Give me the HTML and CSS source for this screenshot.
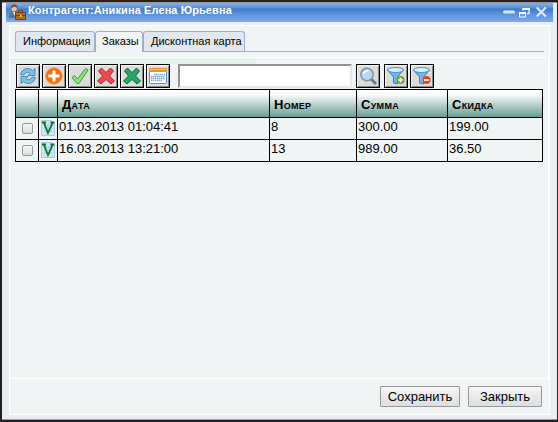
FILE: index.html
```html
<!DOCTYPE html>
<html lang="ru">
<head>
<meta charset="utf-8">
<title>Контрагент</title>
<link rel="stylesheet" href="styles.css">
</head>
<body>
<div class="window">
  <header class="titlebar">
    <svg class="person" width="18" height="17" viewBox="0 0 18 17"><path d="M0 14V10l2-2h6l2 2v4z" fill="#667487"/><path d="M4 8h3l-1 4z" fill="#fff"/><circle cx="5" cy="4.500" r="2.800" fill="#efc28d"/><path d="M2 5V2L4 .5h3L8.500 2v3L7 3H4z" fill="#795032"/><rect x="6.500" y="8.500" width="10" height="7" fill="#b66b24" stroke="#704018"/><path d="M9.500 8V6.500h4V8M7 11.500h9" fill="none" stroke="#704018"/><path d="M11 11h1.500v2H11z" fill="#ffdc67"/></svg>
    <h1>Контрагент:Аникина Елена Юрьевна</h1>
    <svg class="controls" width="48" height="16" viewBox="0 0 48 16"><path d="M3.500 8h9" stroke="#dce8fc" stroke-width="3" stroke-linecap="round"/><path d="M22 6.500V5h6v4.500h-2" fill="none" stroke="#e3edfb" stroke-width="1.500"/><path d="M18.500 9h6v4h-6z" fill="#6a9bdf" stroke="#fff"/><path d="M18 9h7M21.500 5H29" stroke="#fff" stroke-width="2"/><path d="M35.800 3.500l9 9m0-9l-9 9" stroke="#dfebff" stroke-width="2.200"/></svg>
  </header>
  <main class="panel">
    <nav class="tabs"><span class="tab info">Информация</span><span class="tab active">Заказы</span><span class="tab card">Дисконтная карта</span></nav>
    <section class="content">
      <div class="toolbar">
        <button class="tool"><svg viewBox="0 0 20 20"><path d="M2.500 8.500C4 2 11 1 14.500 4.500L17 2.500v7h-7l2-2.200C9.500 5.500 7 6.500 6 9zM17.500 11.500C16 18 9 19 5.500 15.500L3 17.500v-7h7l-2 2.200c2.500 1.800 5 .8 6-1.700z" fill="#7fc0e2" stroke="#3f86ae" stroke-width=".9"/></svg></button>
        <button class="tool"><svg viewBox="0 0 20 20"><circle cx="10" cy="10" r="8.300" fill="#f5700d" stroke="#f0a060"/><path d="M10 4.500v11M4.500 10h11" stroke="#fff" stroke-width="3"/></svg></button>
        <button class="tool"><svg viewBox="0 0 20 20"><path d="M2 11.500l2.500-2L7.500 13l8-10.500L18 4 9 17.500H7z" fill="#8be278" stroke="#3ba236"/></svg></button>
        <button class="tool"><svg viewBox="0 0 20 20"><path d="M2.500 5L5.500 2l4.500 4.500L14.500 2l3 3L13.500 10l5 5-3.500 3-5-4.500L5 18l-3.500-3 5-5z" fill="#ee494e" stroke="#b7242b"/></svg></button>
        <button class="tool"><svg viewBox="0 0 20 20"><path d="M2.500 5L5.500 2l4.500 4.500L14.500 2l3 3L13.500 10l5 5-3.500 3-5-4.500L5 18l-3.500-3 5-5z" fill="#27a367" stroke="#0b6a40"/></svg></button>
        <button class="tool"><svg viewBox="0 0 20 20"><rect x="1.500" y="2.500" width="17" height="15" rx="1" fill="#fff" stroke="#4c91d9"/><path d="M1 2h18v4H1z" fill="#ec922b"/><path d="M2 3.500h16" stroke="#ffc56b"/><path d="M6 8.500h11M3 10.500h14M3 12.500h14M3 14.500h11" stroke="#78ace4" stroke-width="1.300" stroke-dasharray="1.500 .5"/></svg></button>
        <input class="search" type="text" aria-label="Поиск">
        <button class="tool find"><svg viewBox="0 0 20 20"><path d="M13 13l5 5" stroke="#66788f" stroke-width="3"/><circle cx="9" cy="8.500" r="6.200" fill="#b9d8f5" stroke="#7e92aa" stroke-width="1.500"/><path d="M5.500 8a4 4 0 0 1 5-3" fill="none" stroke="#fff" stroke-width="1.500"/></svg></button>
        <button class="tool"><svg viewBox="0 0 20 20"><path d="M1.500 4l6 7v6l4 1v-7l6-7z" fill="#70b7e7" stroke="#3b80b7"/><ellipse cx="9.500" cy="4" rx="8" ry="2.500" fill="#d6efff" stroke="#4990c8"/><circle cx="14.500" cy="14" r="4" fill="#61a91c"/><path d="M12 14h5m-2.500-2.500v5" stroke="#fff" stroke-width="1.700"/></svg></button>
        <button class="tool"><svg viewBox="0 0 20 20"><path d="M1.500 4l6 7v6l4 1v-7l6-7z" fill="#70b7e7" stroke="#3b80b7"/><ellipse cx="9.500" cy="4" rx="8" ry="2.500" fill="#d6efff" stroke="#4990c8"/><circle cx="14.500" cy="14" r="4" fill="#e84220"/><path d="M12 14h5" stroke="#fff" stroke-width="1.700"/></svg></button>
      </div>
      <table>
        <colgroup><col class="c1"><col class="c2"><col class="c3"><col class="c4"><col class="c5"><col class="c6"></colgroup>
        <thead><tr><th></th><th></th><th>Дата</th><th>Номер</th><th>Сумма</th><th>Скидка</th></tr></thead>
        <tbody>
          <tr><td class="pick"><span class="box"></span></td><td class="state"><svg width="14" height="16" viewBox="0 0 14 16"><path d="M.5.500h10l3 3v12H.5z" fill="#cfe3fa" stroke="#a6c9ec"/><path d="M3 5h8M3 8h8M3 11h8" stroke="#9fc4ea"/><path d="M1 2.500h4M9.500 2.500h4M2.800 2.500L7 13l4.800-10.500" fill="none" stroke="#087c19" stroke-width="1.800"/></svg></td><td>01.03.2013 01:04:41</td><td>8</td><td>300.00</td><td>199.00</td></tr>
          <tr><td class="pick"><span class="box"></span></td><td class="state"><svg width="14" height="16" viewBox="0 0 14 16"><path d="M.5.500h10l3 3v12H.5z" fill="#cfe3fa" stroke="#a6c9ec"/><path d="M3 5h8M3 8h8M3 11h8" stroke="#9fc4ea"/><path d="M1 2.500h4M9.500 2.500h4M2.800 2.500L7 13l4.800-10.500" fill="none" stroke="#087c19" stroke-width="1.800"/></svg></td><td>16.03.2013 13:21:00</td><td>13</td><td>989.00</td><td>36.50</td></tr>
        </tbody>
      </table>
    </section>
    <footer><button class="action save">Сохранить</button><button class="action close">Закрыть</button></footer>
  </main>
</div>
</body>
</html>
```
FILE: styles.css
```css
* { box-sizing: border-box; }
body { margin: 0; width: 558px; height: 422px; overflow: hidden; padding: 2px 1px 2px 2px; background: #222; font-family: "Liberation Sans", sans-serif; color: #000; }
.window { height: 418px; padding: 0 4px; background: #e9eef4; border-top: 1px solid #99948f; border-bottom: 1px solid #999ca2; }
.titlebar { height: 19px; display: flex; background: linear-gradient(#80aceb 0, #659be2 20%, #427cc8 32%, #5e92dc 60%, #7eaaea 100%); }
.person { margin: 1px 0 0 3px; }
h1 { margin: 1px 0 0 1px; font-size: 11px; line-height: 13px; letter-spacing: .1px; color: #fff; white-space: nowrap; }
.controls { margin: 1px 4px 0 auto; }
.panel { margin: 3px 3px 0; height: 390px; border: 1px solid #fff; background: #f0f4f4; display: flex; flex-direction: column; }
.tabs { flex: none; height: 26px; margin: 5px 5px 0; display: flex; background: linear-gradient(#9fafcb,#9fafcb) 0 20px / 100% 1px no-repeat; }
.tab { height: 20px; border: 1px solid #9fafcb; border-bottom: 0; border-radius: 3px 3px 0 0; background: #e0e7ef; font-size: 11px; line-height: 19px; padding-left: 7px; white-space: nowrap; }
.info { width: 80px; }
.active { width: 48px; height: 21px; padding-left: 6px; background: #f0f4f7; }
.card { width: 102px; }
.content { flex: none; height: 322px; border: solid #fff; border-width: 1px 1px 1px 0; padding: 6px 0 0 5px; background: linear-gradient(#e4f2ee,#e4f2ee) 0 0 / 246px 6px no-repeat; }
.toolbar { display: flex; gap: 2px; height: 25px; padding-left: 1px; }
.tool { width: 24px; height: 24px; padding: 1px; border: 1px solid #050505; background: #dcdcdc; box-shadow: inset 1px 1px #f4f4f4, inset -1px -1px #8a8a8a; }
.tool svg { display: block; width: 20px; height: 20px; }
.search { width: 174px; height: 24px; margin: 0 2px 0 6px; border: 2px solid; border-color: #929292 #e8e8e8 #e8e8e8 #929292; background: #fff; padding: 1px; }
.find { margin-right: 2px; }
table { width: 528px; table-layout: fixed; border-collapse: collapse; border: 1px solid #000; }
.c1 { width: 23px; } .c2 { width: 19px; } .c3 { width: 212px; } .c4 { width: 87px; } .c5 { width: 91px; } .c6 { width: 95px; }
thead { background: linear-gradient(#fff 0, #f7faf9 18%, #62988e 100%); }
th, td { border: 1px solid #000; text-align: left; white-space: nowrap; }
th { height: 28px; padding: 1px 4px 0; font-size: 13px; line-height: 15px; font-variant: small-caps; letter-spacing: .3px; }
td { height: 22px; padding: 1px 1px 0; font-size: 13px; line-height: 15px; vertical-align: top; }
.pick { padding: 5px 0 0; }
.box { display: block; width: 11px; height: 11px; margin: 0 0 0 6px; border: 1px solid #999; border-radius: 2px; background: linear-gradient(#f5f5f5,#ddd); }
.state { padding: 2px 2px 0; }
.state svg { display: block; }
footer { flex: none; height: 35px; display: flex; justify-content: flex-end; gap: 8px; padding: 7px 7px 0 0; }
.action { height: 21px; border: 1px solid #999; border-radius: 1px; padding: 0; font: 13px/18px "Liberation Sans", sans-serif; background: linear-gradient(#f5f5f5,#dedede); color: #000; }
.save { width: 80px; } .close { width: 74px; }
```
